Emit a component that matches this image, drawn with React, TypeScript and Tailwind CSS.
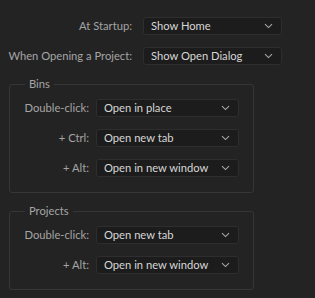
import React from "react";

function Chevron() {
  return (
    <svg width="9" height="6" viewBox="0 0 9 6" className="shrink-0">
      <path d="M1 1.2 L4.5 4.6 L8 1.2" fill="none" stroke="#a8a8a8" strokeWidth="1.1" />
    </svg>
  );
}

function Dropdown({ value, w }: { value: string; w: string }) {
  return (
    <div
      className={`${w} h-[18px] shrink-0 flex items-center justify-between pl-[7px] pr-[8px] rounded-[3px] border border-[#2e2e2e] bg-[#1c1c1c] text-[#d6d6d6]`}
    >
      <span className="leading-none whitespace-nowrap">{value}</span>
      <Chevron />
    </div>
  );
}

function Row({ label, value, lw, dw, gap }: { label: string; value: string; lw: string; dw: string; gap: string }) {
  return (
    <div className={`flex items-center ${gap}`}>
      <div className={`${lw} shrink-0 whitespace-nowrap text-right text-[#a5a5a5] leading-none`}>{label}</div>
      <Dropdown value={value} w={dw} />
    </div>
  );
}

function Group({ title, rows }: { title: string; rows: [string, string][] }) {
  return (
    <fieldset className="ml-[9px] w-[245px] border border-[#363636] rounded-[3px] px-[10px] pb-[15px]">
      <legend className="ml-[5px] px-[4px] text-[#a5a5a5] leading-[14px]">{title}</legend>
      <div className="flex flex-col gap-[12px] mt-[8px]">
        {rows.map(([l, v]) => (
          <Row key={l} label={l} value={v} lw="w-[69px]" dw="w-[143px]" gap="gap-[7px]" />
        ))}
      </div>
    </fieldset>
  );
}

export default function App() {
  return (
    <div
      className="w-[315px] h-[298px] bg-[#232323] pt-[17px] text-[11.2px]"
      style={{ fontFamily: "Lato, 'Open Sans', sans-serif" }}
    >
      <div className="flex flex-col gap-[12px]">
        <Row label="At Startup:" value="Show Home" lw="w-[132px]" dw="w-[139px]" gap="gap-[11px]" />
        <Row label="When Opening a Project:" value="Show Open Dialog" lw="w-[132px]" dw="w-[139px]" gap="gap-[11px]" />
      </div>
      <div className="mt-[12px]">
        <Group
          title="Bins"
          rows={[
            ["Double-click:", "Open in place"],
            ["+ Ctrl:", "Open new tab"],
            ["+ Alt:", "Open in new window"],
          ]}
        />
      </div>
      <div className="mt-[11px]">
        <Group
          title="Projects"
          rows={[
            ["Double-click:", "Open new tab"],
            ["+ Alt:", "Open in new window"],
          ]}
        />
      </div>
    </div>
  );
}
